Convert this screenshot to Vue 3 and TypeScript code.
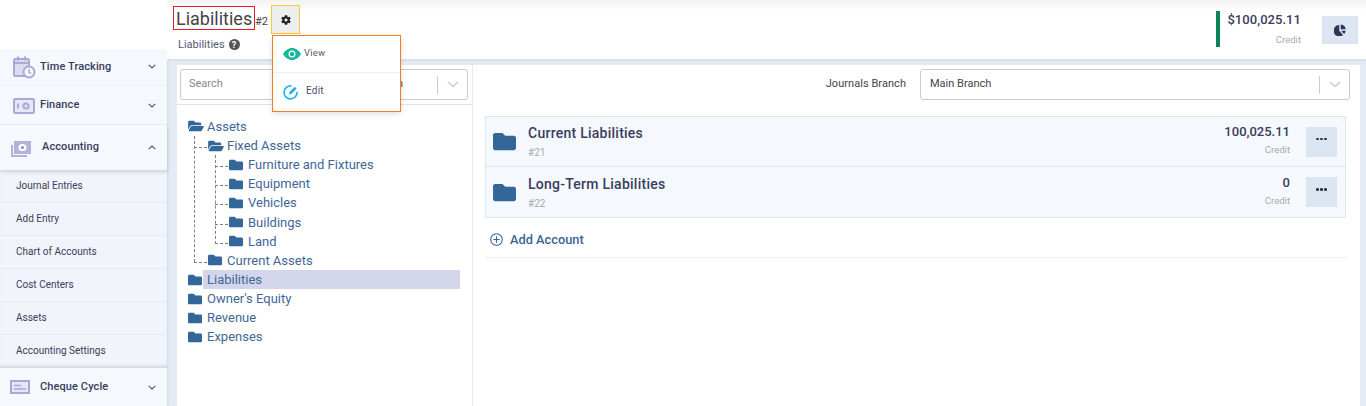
<script setup lang="ts">
interface Node { name: string; open?: boolean; active?: boolean; children?: Node[] }
const tree: Node[] = [
  { name: 'Assets', open: true, children: [
    { name: 'Fixed Assets', open: true, children: [
      { name: 'Furniture and Fixtures' }, { name: 'Equipment' }, { name: 'Vehicles' }, { name: 'Buildings' }, { name: 'Land' }
    ] },
    { name: 'Current Assets' }
  ] },
  { name: 'Liabilities', active: true },
  { name: "Owner's Equity" },
  { name: 'Revenue' },
  { name: 'Expenses' }
]
const flat = (nodes: Node[], level: number, out: { n: Node; level: number; last: boolean }[] = []) => {
  nodes.forEach((n, i) => {
    out.push({ n, level, last: i === nodes.length - 1 })
    if (n.children) flat(n.children, level + 1, out)
  })
  return out
}
const rows = flat(tree, 0)
const subs = ['Journal Entries', 'Add Entry', 'Chart of Accounts', 'Cost Centers', 'Assets', 'Accounting Settings']
const accounts = [
  { name: 'Current Liabilities', code: '#21', amount: '100,025.11' },
  { name: 'Long-Term Liabilities', code: '#22', amount: '0' }
]
const folder = 'M464 128H272l-64-64H48C21.49 64 0 85.49 0 112v288c0 26.51 21.49 48 48 48h416c26.51 0 48-21.49 48-48V176c0-26.51-21.49-48-48-48z'
const folderOpen = 'M572.694 292.093L500.27 416.248A63.997 63.997 0 0 1 444.989 448H45.025c-18.523 0-30.064-20.093-20.731-36.093l72.424-124.155A64 64 0 0 1 152 256h399.964c18.523 0 30.064 20.093 20.73 36.093zM152 224h328v-48c0-26.51-21.49-48-48-48H272l-64-64H48C21.49 64 0 85.49 0 112v278.046l69.077-118.418C86.214 242.25 117.989 224 152 224z'
const cog = 'M487.4 315.7l-42.6-24.6c4.3-23.2 4.3-47 0-70.2l42.6-24.6c4.9-2.8 7.1-8.6 5.5-14-11.1-35.6-30-67.8-54.7-94.6-3.8-4.1-10-5.1-14.8-2.3L380.8 110c-17.9-15.4-38.5-27.3-60.8-35.1V25.8c0-5.6-3.9-10.5-9.4-11.7-36.7-8.2-74.3-7.8-109.2 0-5.5 1.2-9.4 6.1-9.4 11.7V75c-22.2 7.9-42.8 19.8-60.8 35.1L88.7 85.5c-4.9-2.8-11-1.9-14.8 2.3-24.7 26.7-43.6 58.9-54.7 94.6-1.7 5.4.6 11.2 5.5 14L67.3 221c-4.3 23.2-4.3 47 0 70.2l-42.6 24.6c-4.9 2.8-7.1 8.6-5.5 14 11.1 35.6 30 67.8 54.7 94.6 3.8 4.1 10 5.1 14.8 2.3l42.6-24.6c17.9 15.4 38.5 27.3 60.8 35.1v49.2c0 5.6 3.9 10.5 9.4 11.7 36.7 8.2 74.3 7.8 109.2 0 5.5-1.2 9.4-6.1 9.4-11.7v-49.2c22.2-7.9 42.8-19.8 60.8-35.1l42.6 24.6c4.9 2.8 11 1.9 14.8-2.3 24.7-26.7 43.6-58.9 54.7-94.6 1.5-5.5-.7-11.3-5.6-14.1zM256 336c-44.1 0-80-35.9-80-80s35.9-80 80-80 80 35.9 80 80-35.9 80-80 80z'
</script>

<template>
  <div class="page">
    <aside class="side">
      <div class="side-top"></div>
      <div class="nav nav-tt">
        <svg class="nav-ic" width="24" height="24" viewBox="0 0 24 24" fill="none" stroke="#a9a9d6" stroke-width="2">
          <rect x="2" y="4" width="15" height="17" rx="1.5" fill="#dcdcf0"/>
          <path d="M2 8h15M6 1.5v4M13 1.5v4"/>
          <circle cx="17" cy="17" r="5.5" fill="#f5f8fc"/>
          <path d="M17 14v3.2l2 1.3" stroke-width="1.5"/>
        </svg>
        <span class="nav-t">Time Tracking</span>
        <svg class="chev" width="8" height="5" viewBox="0 0 8 5"><path d="M.7.8 4 4 7.300.8" fill="none" stroke="#556" stroke-width="1.100"/></svg>
      </div>
      <div class="nav nav-fi">
        <svg class="nav-ic" width="24" height="20" viewBox="0 0 24 20" fill="none" stroke="#a9a9d6" stroke-width="2">
          <rect x="2" y="3" width="20" height="14" rx="1.5" fill="#e6e6f4"/>
          <circle cx="14" cy="10" r="2.6"/>
          <path d="M6 7.5v5" />
        </svg>
        <span class="nav-t">Finance</span>
        <svg class="chev" width="8" height="5" viewBox="0 0 8 5"><path d="M.7.8 4 4 7.300.8" fill="none" stroke="#556" stroke-width="1.100"/></svg>
      </div>
      <div class="nav nav-ac">
        <svg class="nav-ic ac-ic" width="20" height="16" viewBox="0 0 20 16">
          <path d="M0 4h2v10h14v2H0z" fill="#b3b3da"/>
          <rect x="3" y="0" width="17" height="13" fill="#b3b3da"/>
          <ellipse cx="11.5" cy="6.5" rx="4" ry="3.6" fill="#fff"/>
          <circle cx="11.5" cy="6.5" r="1.6" fill="#8f8fc4"/>
        </svg>
        <span class="nav-t">Accounting</span>
        <svg class="chev" width="8" height="5" viewBox="0 0 8 5"><path d="M.7 4.200 4 1l3.300 3.200" fill="none" stroke="#556" stroke-width="1.100"/></svg>
      </div>
      <div class="subs">
        <div v-for="s in subs" :key="s" class="sub">{{ s }}</div>
      </div>
      <div class="nav nav-ch">
        <svg class="nav-ic" width="20" height="14" viewBox="0 0 20 14" fill="none">
          <rect x="1" y="1" width="18" height="12" fill="#e6e6f4" stroke="#a9a9d6" stroke-width="2"/>
          <path d="M4 5.5h7M4 9h12" stroke="#a9a9d6" stroke-width="1.3"/>
        </svg>
        <span class="nav-t">Cheque Cycle</span>
        <svg class="chev" width="8" height="5" viewBox="0 0 8 5"><path d="M.7.8 4 4 7.300.8" fill="none" stroke="#556" stroke-width="1.100"/></svg>
      </div>
    </aside>

    <main class="main">
      <header class="head">
        <div class="head-l">
          <div class="title-row">
            <h1 class="title">Liabilities</h1>
            <span class="num">#2</span>
            <div class="gear-wrap">
              <button class="gear">
                <svg width="10" height="10" viewBox="0 0 512 512"><path :d="cog" fill="#222"/></svg>
              </button>
              <div class="menu">
                <div class="mi mi-view">
                  <svg width="18" height="12" viewBox="0 0 18 12">
                    <path d="M0 6c2-3.600 5.200-6 9-6s7 2.400 9 6c-2 3.600-5.200 6-9 6s-7-2.400-9-6z" fill="#14b89c"/>
                    <circle cx="9" cy="6" r="3.500" fill="#fff"/>
                    <circle cx="9" cy="6" r="2.200" fill="#14b89c"/>
                  </svg>
                  <span class="mt-view">View</span>
                </div>
                <div class="mi mi-edit">
                  <svg width="16" height="16" viewBox="0 0 16 16" fill="none">
                    <path d="M8.500 2a6.500 6.500 0 1 0 5.500 5.800" stroke="#20b2ee" stroke-width="1.700"/>
                    <path d="M6 10.500l.6-2.700 5-5 2 2-5 5z" fill="#20b2ee"/>
                  </svg>
                  <span class="mt-edit">Edit</span>
                </div>
              </div>
            </div>
          </div>
          <div class="crumb">
            <span>Liabilities</span>
            <span class="q">?</span>
          </div>
        </div>
        <div class="bal">
          <div class="bal-v">$100,025.11</div>
          <div class="bal-c">Credit</div>
        </div>
        <button class="pie">
          <svg width="12" height="12" viewBox="0 0 16 16">
            <path d="M7 1.500v7.500l5 5.500A7.500 7.500 0 1 1 7 1.500z" fill="#2f3559"/>
            <path d="M9 0.500a7 7 0 0 1 6.500 6.500H9z" fill="#2f3559"/>
            <path d="M9.500 9h6a7 7 0 0 1-2 4.300z" fill="#2f3559"/>
          </svg>
        </button>
      </header>

      <div class="panels">
        <section class="left">
          <div class="left-top">
            <div class="select">
              <span class="ph">Search</span>
              <span class="hidden-v">Main Branch</span>
              <span class="sep"></span>
              <svg width="12" height="7" viewBox="0 0 12 7"><path d="M1 1l5 4.600L11 1" fill="none" stroke="#ccc" stroke-width="1.500"/></svg>
            </div>
          </div>
          <div class="tree">
            <div v-for="r in rows" :key="r.n.name" class="row" :class="['lv' + r.level, { active: r.n.active, lastc: r.last }]">
              <svg v-if="r.n.open" class="fo" viewBox="0 0 576 512"><path :d="folderOpen"/></svg>
              <svg v-else class="fc" viewBox="0 0 512 512"><path :d="folder"/></svg>
              <span class="rt">{{ r.n.name }}</span>
            </div>
            <span class="vline v1"></span>
            <span class="vline v2"></span>
          </div>
        </section>
        <section class="right">
          <div class="filter">
            <span class="f-label">Journals Branch</span>
            <div class="select sel2">
              <span class="val">Main Branch</span>
              <span class="sep"></span>
              <svg width="12" height="7" viewBox="0 0 12 7"><path d="M1 1l5 4.600L11 1" fill="none" stroke="#ccc" stroke-width="1.500"/></svg>
            </div>
          </div>
          <div class="list">
            <div v-for="a in accounts" :key="a.code" class="acc">
              <svg class="acc-ic" viewBox="0 0 512 512"><path :d="folder"/></svg>
              <div class="acc-n">
                <div class="acc-name">{{ a.name }}</div>
                <div class="acc-code">{{ a.code }}</div>
              </div>
              <div class="acc-a">
                <div class="acc-v">{{ a.amount }}</div>
                <div class="acc-c">Credit</div>
              </div>
              <button class="more"><span></span><span></span><span></span></button>
            </div>
          </div>
          <div class="add">
            <svg width="13" height="13" viewBox="0 0 13 13" fill="none" stroke="#3b6494" stroke-width="1.100">
              <circle cx="6.500" cy="6.500" r="5.800"/>
              <path d="M6.500 3.300v6.400M3.300 6.500h6.400"/>
            </svg>
            <span>Add Account</span>
          </div>
        </section>
      </div>
    </main>
  </div>
</template>

<style>
html, body { margin: 0; overflow: hidden; background: #e4ebf4; }
</style>

<style scoped>
* { box-sizing: border-box; }
.page { width: 1366px; height: 406px; display: flex; overflow: hidden; font-family: Roboto, "Liberation Sans", sans-serif; color: #3a3d5c; background: #e4ebf4; }
.side { width: 167px; flex: none; background: #f5f8fc; box-shadow: 1px 0 2px rgba(0,0,0,.08); position: relative; z-index: 1; }
.side-top { height: 49px; background: #fff; }
.nav { display: flex; align-items: center; position: relative; border-bottom: 1px solid #eceff5; padding-left: 12px; }
.nav-t { font-size: 11px; font-weight: 500; color: #3a3d5c; letter-spacing: .1px; }
.chev { position: absolute; left: 148px; }
.nav-ic { flex: none; }
.nav-tt { height: 37px; }
.nav-tt .nav-t { margin-left: 4px; margin-bottom: 2px; }
.nav-tt .chev { top: 15px; }
.nav-fi { height: 39px; }
.nav-fi .nav-t { margin-left: 4px; margin-bottom: 2px; }
.nav-fi .nav-ic { margin-top: 1px; }
.nav-ac { height: 45px; padding-left: 11px; box-shadow: 0 2px 4px rgba(0,0,0,.15); border-bottom: 0; z-index: 1; }
.nav-ac .ac-ic { margin-top: 3px; }
.nav-ac .nav-t { margin-left: 11px; margin-top: -3px; }
.nav-ac .chev { top: 20px; }
.subs { background: #f1f4fa; box-shadow: inset 0 -4px 4px -3px rgba(0,0,0,.18); height: 198px; }
.sub { height: 33px; padding: 0 0 2px 16px; font-size: 10px; font-weight: 400; color: #3a3d5c; display: flex; align-items: center; border-bottom: 1px solid #e6e9f0; }
.sub:last-child { border-bottom: 0; height: 33px; }
.nav-ch { height: 38px; border-bottom: 0; padding-left: 10px; }
.nav-ch .nav-t { margin-left: 10px; margin-bottom: 2px; }

.main { flex: 1; min-width: 0; display: flex; flex-direction: column; }
.head { height: 61px; flex: none; background: linear-gradient(#f3f3f3, #fff 11px); border-bottom: 2px solid #d9e0ea; display: flex; padding-left: 6px; position: relative; z-index: 3; }
.head-l { flex: 1; padding-top: 5px; }
.title-row { display: flex; align-items: flex-start; }
.title { margin: 1px 0 0; width: 82px; height: 24px; border: 1px solid #e0202a; font-size: 18px; font-weight: 400; line-height: 22px; padding: 1px 0 0 2px; color: #444; white-space: nowrap; }
.num { font-size: 11px; color: #444; margin-top: 10px; width: 13px; text-align: right; }
.gear-wrap { position: relative; margin-left: 3px; }
.gear { width: 29px; height: 29px; background: #eee; border: 1px solid #f7c844; padding: 0; display: flex; align-items: center; justify-content: center; }
.menu { position: absolute; left: 1px; top: 30px; width: 129px; height: 77px; background: #fff; border: 1px solid #ff7a1a; box-shadow: 0 2px 6px rgba(0,0,0,.12); z-index: 5; }
.mi { height: 37px; display: flex; align-items: center; padding-left: 10px; }
.mi-view { border-bottom: 1px solid #f0f0f0; height: 37px; }
.mt-view { font-size: 9.5px; color: #555a70; margin-left: 3px; margin-top: -4px; letter-spacing: .2px; }
.mi-edit { padding-left: 10px; height: 38px; }
.mt-edit { font-size: 10px; color: #4a4e66; margin-left: 7px; margin-top: -4px; letter-spacing: .2px; }
.crumb { display: flex; align-items: center; margin: 4px 0 0 5px; font-size: 11px; color: #555a70; }
.q { width: 11px; height: 11px; border-radius: 50%; background: #555; color: #fff; font-size: 9px; font-weight: 700; display: flex; align-items: center; justify-content: center; margin-left: 4px; }
.bal { width: 85px; height: 36px; margin-top: 11px; border-left: 4px solid #0b8457; padding: 1px 0 0 0; text-align: right; }
.bal-v { font-size: 13px; font-weight: 500; color: #3a3d5c; padding-right: 0; letter-spacing: .05px; }
.bal-c { font-size: 9.5px; color: #aaa; margin-top: 7px; }
.pie { width: 36px; height: 28px; margin: 16px 8px 0 21px; background: #dce6f2; border: 0; padding: 0; display: flex; align-items: center; justify-content: center; flex: none; }

.panels { flex: 1; display: flex; padding: 4px 6px 0 10px; gap: 1px; min-height: 0; }
.left { width: 295px; flex: none; background: #fff; }
.left-top { height: 40px; padding: 4px 4px 0 3px; border-bottom: 1px solid #dfe3ea; }
.select { height: 31px; border: 1px solid #ccc; border-radius: 3px; display: flex; align-items: center; padding: 0 8px 2px 8px; background: #fff; font-size: 11px; }
.select svg { margin-top: 2px; }
.ph { color: #888; }
.hidden-v { margin-left: auto; margin-right: 34px; color: #555; }
.sep { width: 1px; height: 18px; background: #ccc; margin: 2px 9px 0 0; }
.tree { position: relative; padding-top: 11.78px; }
.row { height: 19.17px; display: flex; align-items: center; position: relative; color: #3f6796; font-size: 13px; }
.row svg { fill: #336699; flex: none; position: relative; }
.fc { width: 14px; height: 14px; }
.fo { width: 16px; height: 14px; }
.rt { position: absolute; line-height: 19px; top: 0; }
.lv0 { padding-left: 11px; }
.lv0 .rt { left: 30px; }
.lv1 { padding-left: 31px; }
.lv1 .rt { left: 50px; }
.lv2 { padding-left: 52px; }
.lv2 .rt { left: 71px; }
.lv1::before { content: ""; position: absolute; left: 17px; width: 13px; top: 11px; border-top: 1px dashed #808080; }
.lv2::before { content: ""; position: absolute; left: 38px; width: 13px; top: 11px; border-top: 1px dashed #808080; }
.active::after { content: ""; position: absolute; left: 26px; width: 257px; top: 0; bottom: 0; background: #d3d5ea; }
.active .rt { z-index: 1; }
.vline { position: absolute; width: 0; border-left: 1px dashed #808080; }
.v1 { left: 17px; top: 31px; height: 126px; }
.v2 { left: 38px; top: 50px; height: 89px; }

.right { flex: 1; background: #fff; padding: 0 14px 0 12px; min-width: 0; }
.filter { display: flex; align-items: center; justify-content: flex-end; height: 31px; margin-top: 4px; gap: 14px; }
.f-label { font-size: 11px; color: #444; margin-bottom: 2px; letter-spacing: .05px; }
.sel2 { width: 430px; margin-right: -4px; padding-left: 9px; }
.val { color: #444; flex: 1; }
.list { margin-top: 16px; border: 1px solid #dde8f5; background: #f5f8fc; }
.acc { height: 50px; display: flex; align-items: center; padding: 0 8px 0 7px; border-bottom: 1px solid #dde8f5; }
.acc:last-child { border-bottom: 0; }
.acc-ic { width: 23px; height: 23px; fill: #336699; flex: none; }
.acc-n { flex: 1; margin-left: 12px; padding-top: 1px; }
.acc-name { font-size: 14px; font-weight: 500; color: #3a3d5c; line-height: 16px; letter-spacing: .25px; }
.acc-code { font-size: 10px; color: #aaa; margin-top: 6px; line-height: 12px; }
.acc-a { text-align: right; margin-right: 16px; }
.acc-v { font-size: 13px; font-weight: 500; color: #3a3d5c; line-height: 15px; margin-top: -3px; }
.acc-c { font-size: 9.500px; color: #aaa; margin-top: 5px; line-height: 12px; }
.more { width: 31px; height: 30px; background: #dce6f2; border: 0; padding: 0 0 5px; display: flex; align-items: center; justify-content: center; gap: 1.500px; }
.more span { width: 2.500px; height: 2.500px; background: #333; border-radius: 50%; }
.add { height: 40px; display: flex; align-items: center; gap: 7px; padding: 3px 0 0 5px; border-bottom: 1px solid #eceef2; color: #3b6494; font-size: 12.800px; font-weight: 500; }
</style>
